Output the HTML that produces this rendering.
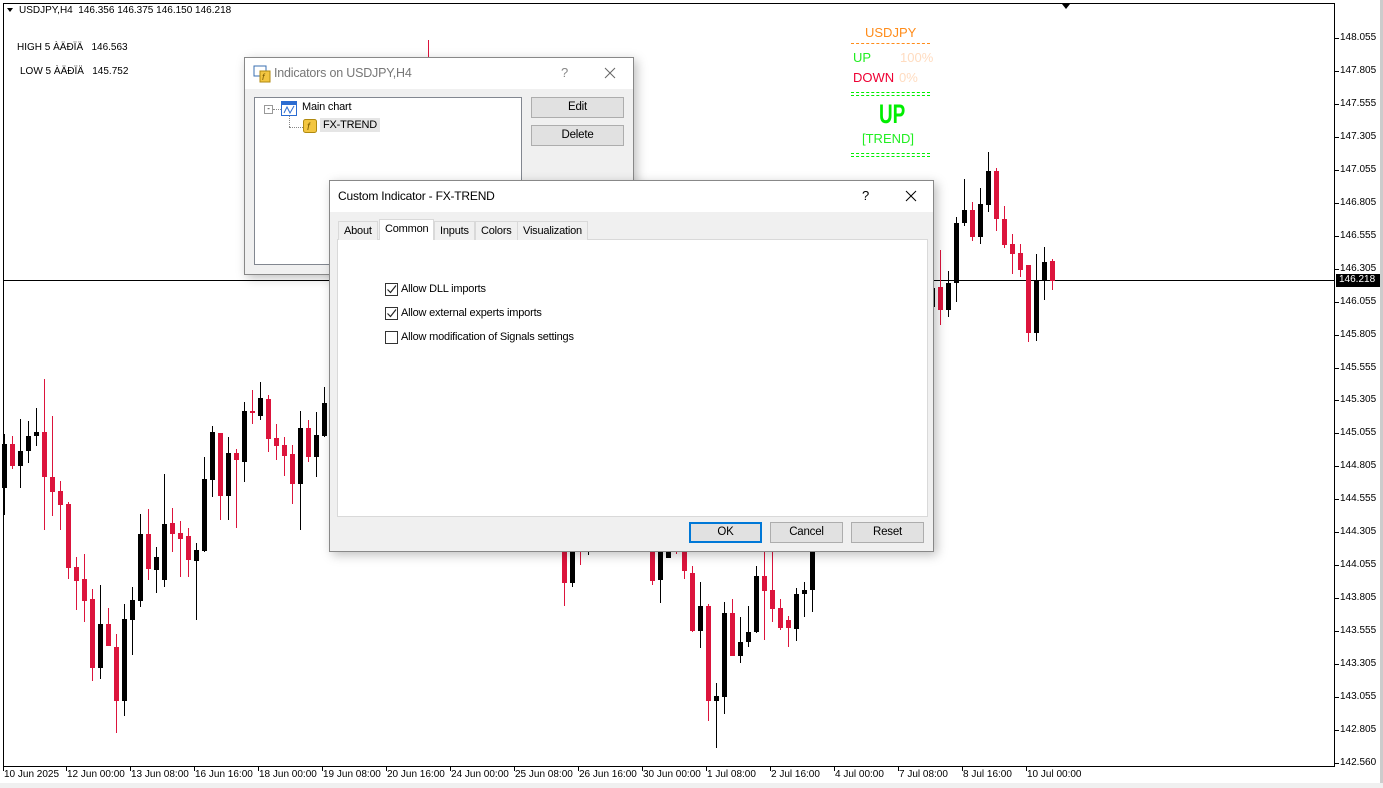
<!DOCTYPE html>
<html><head><meta charset="utf-8">
<style>
*{margin:0;padding:0;box-sizing:border-box}
body{width:1383px;height:788px;background:#fff;position:relative;overflow:hidden;font-family:Tahoma,"DejaVu Sans Condensed","Liberation Sans",sans-serif}
.t{position:absolute;white-space:nowrap;font-size:10px;color:#000;font-family:"Liberation Sans",sans-serif}
svg{position:absolute;left:0;top:0}
.dlg{position:absolute;background:#f0f0f0;border:1px solid #888;box-shadow:3px 3px 10px rgba(0,0,0,.25);font-family:"Liberation Sans",sans-serif;font-size:11px;letter-spacing:-0.2px;color:#000}
.ttl{position:absolute;left:0;top:0;right:0;height:31px;background:#fff}
.btn{position:absolute;background:#e1e1e1;border:1px solid #adadad;text-align:center;line-height:18px;font-size:11.5px}
.tab{position:absolute;top:40px;height:19px;border:1px solid #d9d9d9;border-bottom:none;background:#f0f0f0;font-size:11px;line-height:18px;padding:0 5px}
.cb{position:absolute;left:55px;width:13px;height:13px;border:1px solid #333;background:#fff}
.cl{position:absolute;left:71px;font-size:11px;line-height:13px}
</style></head><body>
<svg width="1383" height="788" id="ch">
<rect x="1380" y="0" width="3" height="788" fill="#ccc"/>
<rect x="0" y="783" width="1383" height="5" fill="#f0f0f0"/>
<line x1="3.5" y1="3" x2="3.5" y2="766" stroke="#000"/>
<line x1="3" y1="3.5" x2="1335" y2="3.5" stroke="#000"/>
<line x1="1334.5" y1="3" x2="1334.5" y2="766" stroke="#000"/>
<line x1="3" y1="766.5" x2="1335" y2="766.5" stroke="#000"/>
<line x1="3" y1="280.5" x2="1335" y2="280.5" stroke="#000"/>
<path d="M1062 4h8l-4 5z" fill="#000"/>
<path d="M7 8h6l-3 4z" fill="#000"/>
<rect x="428" y="40" width="1" height="17" fill="#dc143c"/>
<g id="cd"></g><g id="ax"></g>
<rect x="1336" y="274" width="44" height="13" fill="#000"/>
</svg>
<div class="t" style="left:19px;top:5px">USDJPY,H4&nbsp; 146.356 146.375 146.150 146.218</div>
<div class="t" style="left:17px;top:42px">HIGH 5 ÀÄÐÏÄ &nbsp; 146.563</div>
<div class="t" style="left:20px;top:66px">LOW 5 ÀÄÐÏÄ &nbsp; 145.752</div>
<div class="t" style="left:1339px;top:274px;color:#fff">146.218</div>
<div id="lbl"></div>

<div class="t" style="left:865px;top:25px;font-size:13px;color:#ff8c1a">USDJPY</div>
<div style="position:absolute;left:851px;top:43px;width:79px;border-top:1px dashed #ff8c1a"></div>
<div class="t" style="left:853px;top:50px;font-size:13px;color:#22ee22">UP</div>
<div class="t" style="left:900px;top:50px;font-size:13px;color:#ffdcc0">100%</div>
<div class="t" style="left:853px;top:70px;font-size:13px;color:#ee0033">DOWN</div>
<div class="t" style="left:899px;top:70px;font-size:13px;color:#ffdcc0">0%</div>
<div style="position:absolute;left:851px;top:92px;width:79px;height:4px;border-top:1px dashed #00ee00;border-bottom:1px dashed #00ee00"></div>
<div class="t" style="left:879px;top:99px;font-size:27px;font-weight:bold;color:#00ee00;transform:scaleX(.7);transform-origin:left">UP</div>
<div class="t" style="left:862px;top:131px;font-size:13px;color:#22ee22">[TREND]</div>
<div style="position:absolute;left:851px;top:153px;width:79px;height:4px;border-top:1px dashed #00ee00;border-bottom:1px dashed #00ee00"></div>

<div class="dlg" style="left:244px;top:57px;width:390px;height:218px">
 <div class="ttl"></div>
 <svg width="20" height="18" style="left:8px;top:7px"><rect x="1" y="1" width="12" height="10" fill="#fff" stroke="#3a6fb0"/><rect x="7" y="6" width="10" height="11" fill="#f3c641" stroke="#b08a10"/><text x="9" y="15" font-size="9" font-style="italic" fill="#7a5a00">f</text></svg>
 <div style="position:absolute;left:29px;top:8px;font-size:12.5px;color:#777">Indicators on USDJPY,H4</div>
 <div style="position:absolute;left:316px;top:7px;font-size:13px;color:#888">?</div>
 <svg width="12" height="12" style="left:359px;top:9px"><path d="M1 1l10 10M11 1l-10 10" stroke="#666" stroke-width="1"/></svg>
 <div style="position:absolute;left:9px;top:39px;width:268px;height:168px;background:#fff;border:1px solid #828790">
  <div style="position:absolute;left:9px;top:7px;width:9px;height:9px;border:1px solid #999;font-size:8px;line-height:6px;text-align:center">-</div>
  <div style="position:absolute;left:18px;top:11px;width:8px;border-top:1px dotted #888"></div>
  <div style="position:absolute;left:34px;top:13px;height:16px;border-left:1px dotted #888"></div>
  <div style="position:absolute;left:34px;top:29px;width:14px;border-top:1px dotted #888"></div>
  <svg width="16" height="15" style="left:26px;top:3px"><rect x=".5" y=".5" width="15" height="14" fill="#fff" stroke="#2b6cd1"/><rect x="1" y="1" width="14" height="3" fill="#2b6cd1"/><path d="M3 12l3-6 3 6 4-7" stroke="#2b6cd1" fill="none"/></svg>
  <div style="position:absolute;left:47px;top:3px">Main chart</div>
  <svg width="15" height="15" style="left:48px;top:21px"><rect x=".5" y=".5" width="13" height="13" rx="2" fill="#f3c641" stroke="#b08a10"/><text x="4" y="11" font-size="10" font-style="italic" fill="#7a5a00">f</text></svg>
  <div style="position:absolute;left:65px;top:20px;background:#e5e5e5;padding:1px 3px">FX-TREND</div>
 </div>
 <div class="btn" style="left:286px;top:39px;width:93px;height:21px">Edit</div>
 <div class="btn" style="left:286px;top:67px;width:93px;height:21px">Delete</div>
</div>

<div class="dlg" style="left:329px;top:180px;width:605px;height:372px">
 <div class="ttl"></div>
 <div style="position:absolute;left:8px;top:8px;font-size:12px">Custom Indicator - FX-TREND</div>
 <div style="position:absolute;left:532px;top:7px;font-size:13px">?</div>
 <svg width="12" height="12" style="left:575px;top:9px"><path d="M1 1l10 10M11 1l-10 10" stroke="#000" stroke-width="1"/></svg>
 <div style="position:absolute;left:7px;top:58px;width:591px;height:278px;background:#fff;border:1px solid #d9d9d9"></div>
 <div class="tab" style="left:8px">About</div>
 <div class="tab" style="left:49px;top:38px;height:21px;background:#fff;border-color:#d9d9d9">Common</div>
 <div class="tab" style="left:104px">Inputs</div>
 <div class="tab" style="left:145px">Colors</div>
 <div class="tab" style="left:187px">Visualization</div>
 <div class="cb" style="top:102px"><svg width="11" height="11" style="position:absolute;left:0;top:0"><path d="M1.5 5.5l3 3 5.5-7" stroke="#222" fill="none" stroke-width="1.2"/></svg></div>
 <div class="cl" style="top:102px">Allow DLL imports</div>
 <div class="cb" style="top:126px"><svg width="11" height="11" style="position:absolute;left:0;top:0"><path d="M1.5 5.5l3 3 5.5-7" stroke="#222" fill="none" stroke-width="1.2"/></svg></div>
 <div class="cl" style="top:126px">Allow external experts imports</div>
 <div class="cb" style="top:150px"></div>
 <div class="cl" style="top:150px">Allow modification of Signals settings</div>
 <div class="btn" style="left:359px;top:341px;width:73px;height:21px;border:2px solid #0078d7;line-height:17px">OK</div>
 <div class="btn" style="left:440px;top:341px;width:73px;height:21px">Cancel</div>
 <div class="btn" style="left:521px;top:341px;width:73px;height:21px">Reset</div>
</div>

<script>
var D=[
[4,444,488,434,515,0],[12,444,466,436,469,1],[20,451,466,419,488,0],[28,436,451,421,463,0],[36,432,436,408,446,0],
[44,432,477,379,530,1],[52,477,492,416,516,1],[60,491,505,481,530,1],[68,504,568,502,579,1],[76,567,581,557,610,1],
[84,579,601,554,622,1],[92,599,668,589,681,1],[100,624,668,585,679,0],[108,624,646,608,646,1],[116,647,701,634,733,1],
[124,619,701,604,716,0],[132,600,620,587,655,0],[140,534,601,514,607,0],[148,534,569,509,580,1],[156,557,570,547,593,0],
[164,524,580,474,587,0],[172,523,534,508,552,1],[180,533,539,521,577,1],[188,536,560,528,577,1],[196,550,561,543,620,0],
[204,479,551,457,552,0],[212,432,480,426,497,0],[220,433,496,433,520,1],[228,453,496,437,520,0],[236,453,460,449,528,1],
[244,411,462,402,482,0],[252,411,413,390,424,1],[260,398,416,382,420,0],[268,399,439,395,452,1],[276,438,446,424,460,1],
[284,445,456,437,476,1],[292,454,484,445,504,1],[300,428,484,411,530,0],[308,428,457,420,462,1],[316,435,457,412,477,0],
[324,403,436,387,437,0],
[564,540,583,540,606,1],[572,540,583,540,587,0],[580,540,548,540,565,1],[588,540,545,540,555,0],
[652,540,581,540,585,1],[660,540,580,540,603,0],[668,540,558,540,558,0],[676,540,545,540,554,1],[684,540,571,540,579,1],
[692,573,631,566,632,1],[700,606,631,582,648,0],[708,606,701,604,721,1],[716,696,701,683,748,0],[724,613,697,602,714,0],
[732,613,656,599,656,1],[740,642,656,617,663,0],[748,632,642,606,647,0],[756,576,632,566,633,0],[764,576,591,551,640,1],
[772,590,609,551,622,1],[780,608,628,599,630,1],[788,620,628,616,647,1],[796,594,629,588,641,0],[804,590,594,582,617,0],
[812,551,590,551,612,0],
[932,288,307,283,320,0],[940,287,310,250,325,1],[948,283,310,271,317,0],[956,223,283,217,302,0],[964,210,223,179,226,0],
[972,210,237,202,241,1],[980,204,237,188,244,0],[988,171,205,152,212,0],[996,171,219,168,231,1],[1004,219,245,206,248,1],
[1012,244,254,234,274,1],[1020,253,270,244,277,1],[1028,265,333,265,342,1],[1036,281,333,254,341,0],[1044,262,281,247,300,0],[1052,261,281,259,290,1]];
var s='';D.forEach(function(c){var col=c[5]?'#dc143c':'#000';
s+='<rect x="'+(c[0])+'" y="'+c[3]+'" width="1" height="'+(c[4]-c[3])+'" fill="'+col+'"/>';
s+='<rect x="'+(c[0]-2)+'" y="'+c[1]+'" width="5" height="'+Math.max(2,c[2]-c[1])+'" fill="'+col+'"/>';});
document.getElementById('cd').innerHTML=s;
var P=['148.055','147.805','147.555','147.305','147.055','146.805','146.555','146.305','146.055','145.805','145.555','145.305','145.055','144.805','144.555','144.305','144.055','143.805','143.555','143.305','143.055','142.805','142.560'];
var a='',h='';P.forEach(function(p,i){var y=Math.round(38+i*32.95);a+='<rect x="1335" y="'+y+'" width="4" height="1" fill="#000"/>';
h+='<div class="t" style="left:1340px;top:'+(y-6)+'px">'+p+'</div>';});
var T=[['10 Jun 2025',4],['12 Jun 00:00',67],['13 Jun 08:00',131],['16 Jun 16:00',195],['18 Jun 00:00',259],['19 Jun 08:00',323],['20 Jun 16:00',387],['24 Jun 00:00',451],['25 Jun 08:00',515],['26 Jun 16:00',579],['30 Jun 00:00',643],['1 Jul 08:00',707],['2 Jul 16:00',771],['4 Jul 00:00',835],['7 Jul 08:00',899],['8 Jul 16:00',963],['10 Jul 00:00',1027]];
T.forEach(function(t){a+='<rect x="'+(t[1]-1)+'" y="767" width="1" height="4" fill="#000"/>';h+='<div class="t" style="left:'+t[1]+'px;top:769px">'+t[0]+'</div>';});
document.getElementById('ax').innerHTML=a;document.getElementById('lbl').innerHTML=h;
</script>
</body></html>
